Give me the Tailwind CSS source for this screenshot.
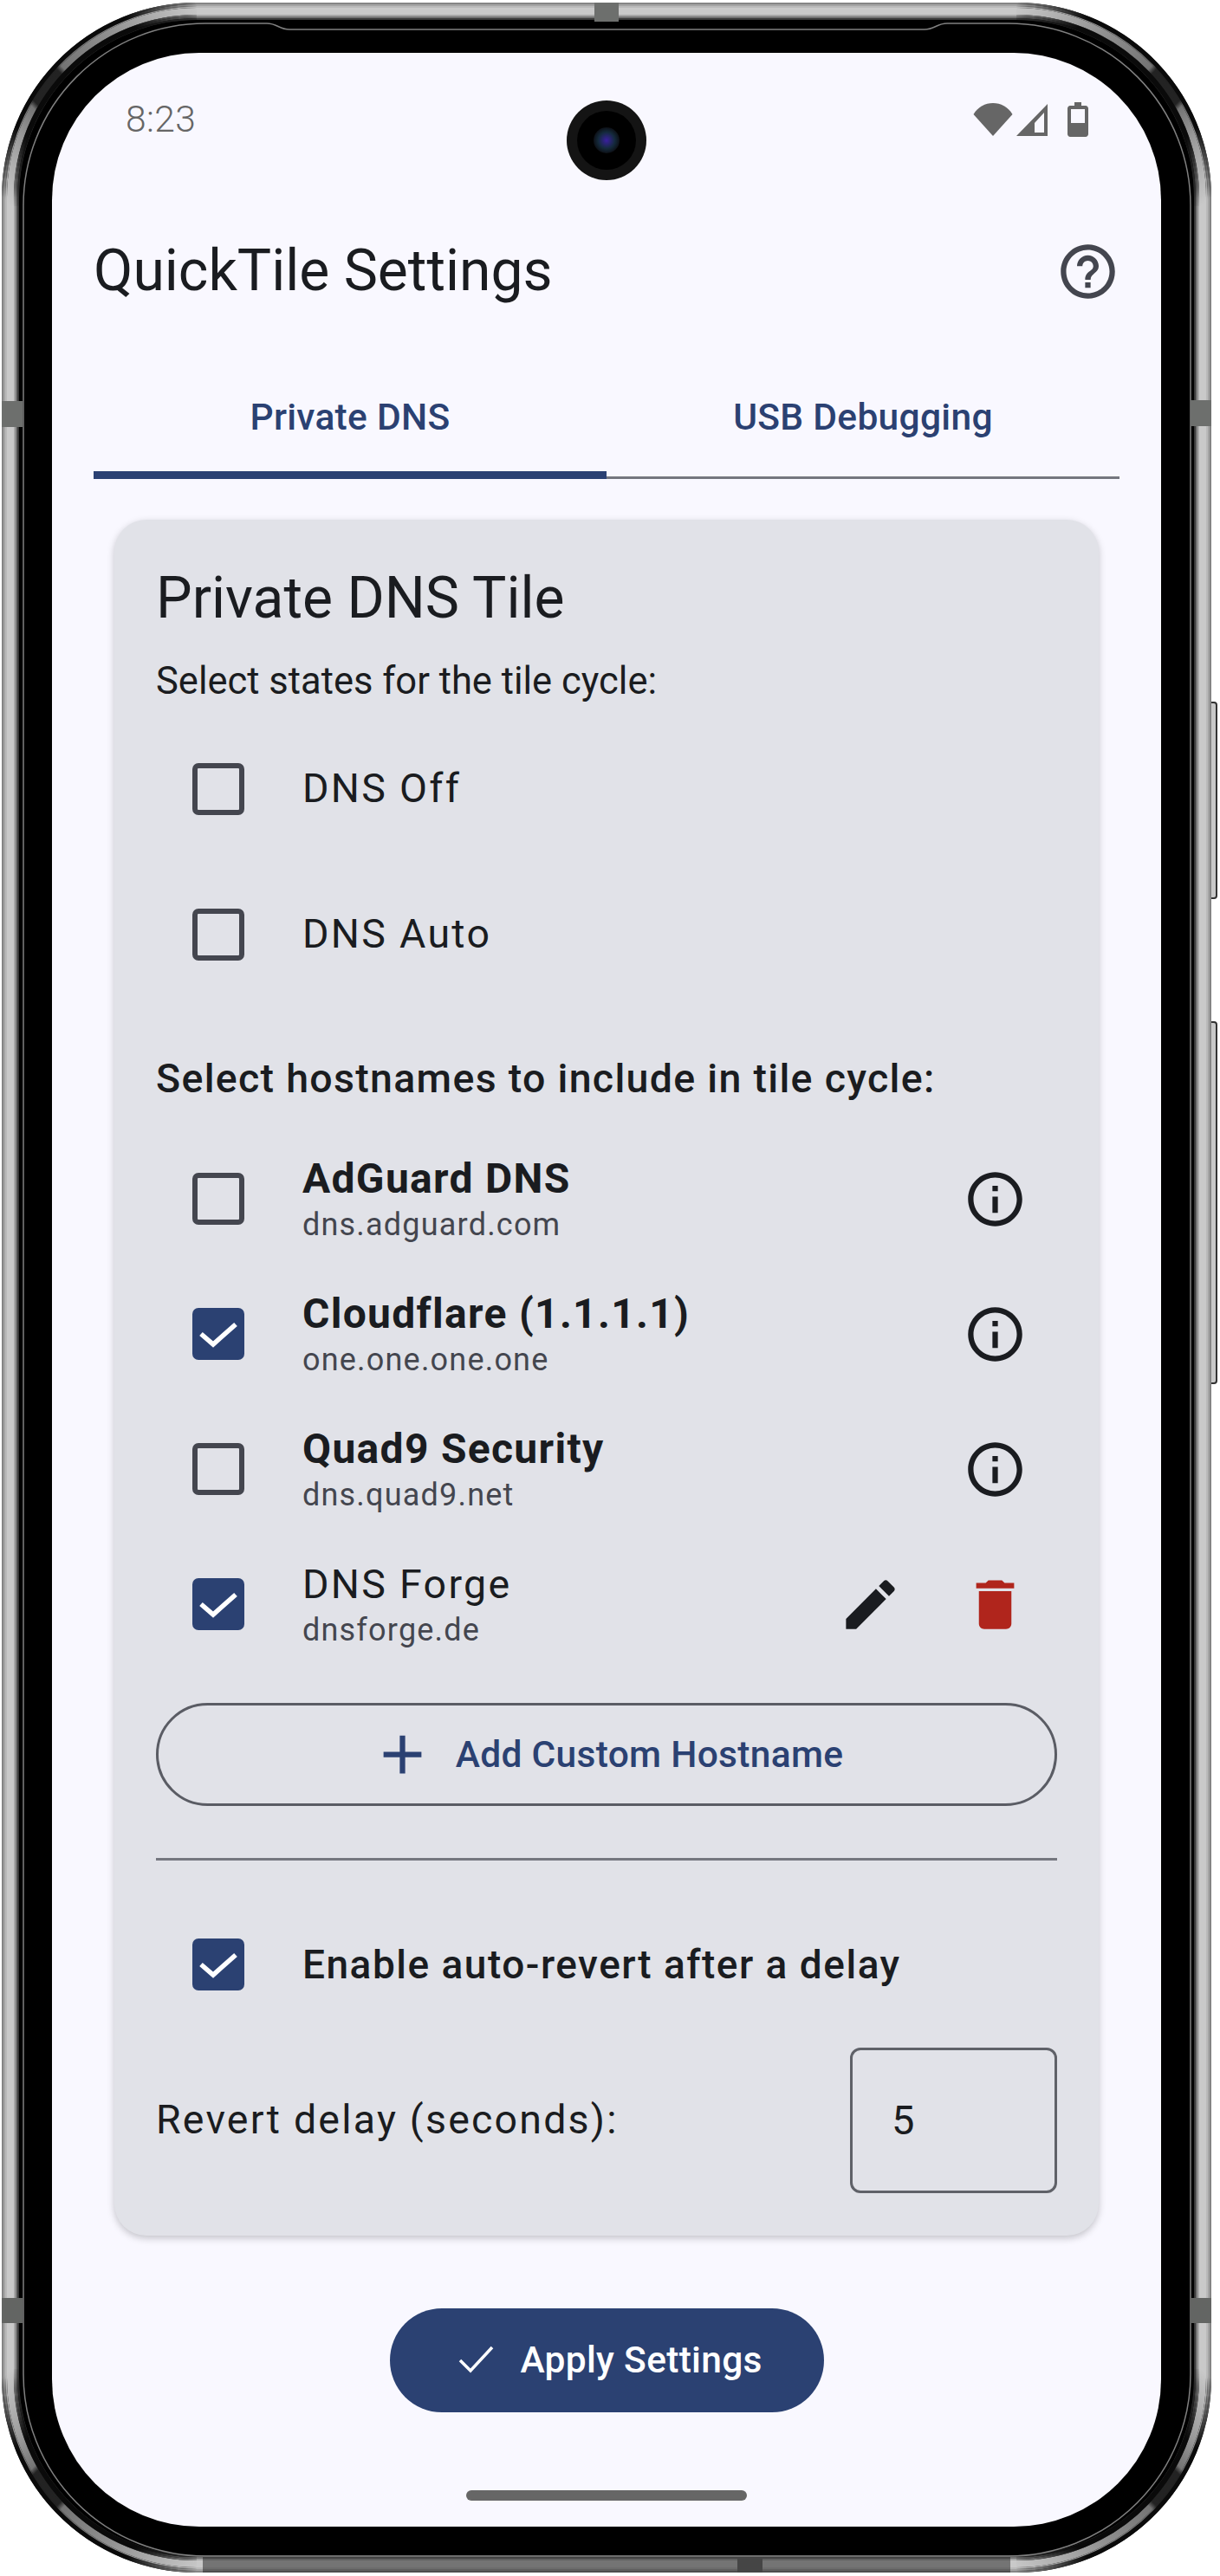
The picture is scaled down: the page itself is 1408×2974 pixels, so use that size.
<!DOCTYPE html>
<html lang="en">
<head>
  <meta charset="UTF-8" />
  <title>QuickTile Settings</title>
  <script src="https://cdn.jsdelivr.net/npm/@tailwindcss/browser@4"></script>
</head>
<body class="bg-white">
  <div class="relative w-[1408px] h-[2974px] bg-white font-[family-name:Roboto,sans-serif] text-[#1a1c20] overflow-hidden">
    <!-- side buttons -->
    <div class="absolute left-[1396px] top-[810px] w-[9px] h-[228px] bg-[#c8c8c8] border-2 border-[#333] rounded-r-[4px]"></div>
    <div class="absolute left-[1396px] top-[1179px] w-[9px] h-[419px] bg-[#c8c8c8] border-2 border-[#333] rounded-r-[4px]"></div>

    <!-- phone body -->
    <div class="relative ml-[2px] mt-[3px] w-[1396px] h-[2967px] rounded-[225px] bg-black pl-[58px] pr-[58px] pt-[58px] pb-[53px]">
      <svg class="absolute left-0 top-0" width="1396" height="2967" viewBox="0 0 1396 2967" fill="none">
        <defs>
          <linearGradient id="cornerPatch" gradientUnits="userSpaceOnUse" x1="8" y1="232" x2="232" y2="8">
            <stop offset="0" stop-color="#0c0c0c" stop-opacity="0" />
            <stop offset="0.2" stop-color="#0c0c0c" stop-opacity="0.25" />
            <stop offset="0.31" stop-color="#0c0c0c" stop-opacity="0.45" />
            <stop offset="0.33" stop-color="#1c1c1c" stop-opacity="0.96" />
            <stop offset="0.47" stop-color="#1c1c1c" stop-opacity="0.96" />
            <stop offset="0.49" stop-color="#0c0c0c" stop-opacity="0.45" />
            <stop offset="0.7" stop-color="#0c0c0c" stop-opacity="0.3" />
            <stop offset="1" stop-color="#0c0c0c" stop-opacity="0" />
          </linearGradient>
          <linearGradient id="cornerEdge" gradientUnits="userSpaceOnUse" x1="8" y1="232" x2="232" y2="8">
            <stop offset="0" stop-color="#0a0a0a" stop-opacity="0" />
            <stop offset="0.22" stop-color="#0a0a0a" />
            <stop offset="0.78" stop-color="#0a0a0a" />
            <stop offset="1" stop-color="#0a0a0a" stop-opacity="0" />
          </linearGradient>
          <g id="corner">
            <path d="M10 235A215 215 0 0 1 225 10" stroke="url(#cornerPatch)" stroke-width="12" />
            <path d="M2.500 235A222.500 222.500 0 0 1 225 2.500" stroke="url(#cornerEdge)" stroke-width="5" />
            <path d="M17 235A208 208 0 0 1 225 17" stroke="url(#cornerEdge)" stroke-width="6" />
          </g>
        </defs>
        <rect x="1" y="1" width="1394" height="2965" rx="224" stroke="#858585" stroke-width="2" />
        <rect x="3" y="3" width="1390" height="2961" rx="222" stroke="#a4a4a4" stroke-width="2" />
        <rect x="5" y="5" width="1386" height="2957" rx="220" stroke="#bababa" stroke-width="2" />
        <rect x="10" y="10" width="1376" height="2947" rx="215" stroke="#c9c9c9" stroke-width="8" />
        <rect x="15" y="15" width="1366" height="2937" rx="210" stroke="#a6a6a6" stroke-width="2" />
        <rect x="17" y="17" width="1362" height="2933" rx="208" stroke="#737373" stroke-width="2" />
        <rect x="19" y="19" width="1358" height="2929" rx="206" stroke="#393939" stroke-width="2" />
        <use href="#corner" />
        <use href="#corner" transform="translate(1396 0) scale(-1 1)" />
        <use href="#corner" transform="translate(0 2967) scale(1 -1)" />
        <use href="#corner" transform="translate(1396 2967) scale(-1 -1)" />
        <rect x="232" y="2949" width="932" height="18" fill="#000" fill-opacity="0.42" />
        <path d="M25 2738L25 235A210 210 0 0 1 235 24L306 24C318 24 320 31 332 31L1065 31C1077 31 1079 24 1091 24L1162 24A210 210 0 0 1 1372 235L1372 2738A210 210 0 0 1 1162 2948L235 2948A210 210 0 0 1 25 2738Z" stroke="#808080" stroke-width="1.500" />
        <rect x="0" y="460" width="24" height="30" fill="#6d6f6d" />
        <rect x="1372" y="459" width="24" height="30" fill="#6d6f6d" />
        <rect x="0" y="2650" width="24" height="29" fill="#636563" />
        <rect x="1372" y="2650" width="24" height="29" fill="#636563" />
        <rect x="684" y="0" width="28" height="22" fill="#6d6f6d" />
        <rect x="849" y="2950" width="29" height="17" fill="#454545" />
      </svg>

      <!-- screen -->
      <div class="relative w-[1280px] h-[2856px] rounded-[170px] bg-[#f9f8ff] overflow-hidden">
        <!-- camera -->
        <div class="absolute left-[594px] top-[55px] w-[92px] h-[92px] rounded-full bg-[#141414] flex items-center justify-center">
          <div class="w-[68px] h-[68px] rounded-full bg-black flex items-center justify-center">
            <div class="w-[30px] h-[30px] rounded-full bg-[radial-gradient(circle,#3a1fa0_0%,#142a3c_45%,#0c0c10_75%,#555555_100%)]"></div>
          </div>
        </div>

        <!-- status bar -->
        <div class="h-[154px] pl-[85px] pr-[84px] flex items-center justify-between text-[#666666]">
          <span class="text-[42.500px] leading-none font-light tracking-[0.4px]">8:23</span>
          <div class="flex items-center">
            <svg width="46" height="40" viewBox="0 0 46 40" fill="#666666"><path d="M0.500 14C6 5 14 1 23 1s17 4 22.500 13L23 39z" /></svg>
            <svg class="ml-[3px]" width="38" height="40" viewBox="0 0 38 40" fill="#666666"><path fill-rule="evenodd" d="M37 2V39H1zM33 12L22 24V35H33z" /></svg>
            <svg class="ml-[22px]" width="24" height="40" viewBox="0 0 24 40" fill="#666666"><path fill-rule="evenodd" d="M8 0h8v4h5c1.500 0 3 1.500 3 3v30c0 1.500-1.500 3-3 3H3c-1.500 0-3-1.500-3-3V7c0-1.500 1.500-3 3-3h5zM4 8v16h16V8z" /></svg>
          </div>
        </div>

        <!-- header -->
        <div class="h-[196px] pl-[48px] pr-[47px] flex items-center justify-between">
          <h1 class="text-[66px] leading-none">QuickTile Settings</h1>
          <svg width="75" height="75" viewBox="0 0 24 24" fill="#44464f"><path d="M11 18h2v-2h-2v2zm1-16C6.480 2 2 6.480 2 12s4.480 10 10 10 10-4.480 10-10S17.520 2 12 2zm0 18c-4.410 0-8-3.590-8-8s3.590-8 8-8 8 3.590 8 8-3.590 8-8 8zm0-14c-2.210 0-4 1.790-4 4h2c0-1.100.900-2 2-2s2 .900 2 2c0 2-3 1.750-3 5h2c0-2.250 3-2.500 3-5 0-2.210-1.790-4-4-4z" /></svg>
        </div>

        <!-- tabs -->
        <div class="mx-[48px] h-[142px] flex border-b-[3px] border-[#75777f] text-[42.500px] font-medium tracking-[0.3px]">
          <div class="relative w-[592px] h-[142px] flex items-center justify-center text-[#2b4172]">
            Private DNS
            <div class="absolute left-0 right-0 bottom-0 h-[9px] bg-[#2b4172]"></div>
          </div>
          <div class="w-[592px] h-[142px] flex items-center justify-center text-[#2b4172]">USB Debugging</div>
        </div>

        <!-- card -->
        <div class="mt-[47px] mx-[72px] w-[1136px] rounded-[37px] bg-[#e1e2e8] shadow-[0_3px_9px_rgba(0,0,0,0.22)] px-[48px] pt-[48px] pb-[49px]">
          <h2 class="h-[86px] flex items-center text-[66px] leading-none">Private DNS Tile</h2>
          <p class="mt-[17px] h-[72px] flex items-center text-[43.500px]">Select states for the tile cycle:</p>

          <div class="mt-[4px]">
            <div class="h-[168px] flex items-center pl-[42px]">
              <div class="w-[60px] h-[60px] rounded-[7px] border-[6.500px] border-[#44464f]"></div>
              <span class="ml-[67px] text-[46.500px] tracking-[2.300px]">DNS Off</span>
            </div>
            <div class="h-[168px] flex items-center pl-[42px]">
              <div class="w-[60px] h-[60px] rounded-[7px] border-[6.500px] border-[#44464f]"></div>
              <span class="ml-[67px] text-[46.500px] tracking-[2.300px]">DNS Auto</span>
            </div>
          </div>

          <p class="mt-[48px] h-[70px] flex items-center text-[46.500px] font-medium tracking-[1.300px]">Select hostnames to include in tile cycle:</p>

          <div class="mt-[25px]">
            <div class="h-[156px] flex items-center pl-[42px] pr-[34.500px]">
              <div class="w-[60px] h-[60px] rounded-[7px] border-[6.500px] border-[#44464f]"></div>
              <div class="ml-[67px] pt-[3px] flex-1">
                <div class="text-[48px] leading-[56px] font-bold tracking-[1.300px]">AdGuard DNS</div>
                <div class="text-[36px] leading-[50px] tracking-[1.200px] text-[#44464f]">dns.adguard.com</div>
              </div>
              <svg width="75" height="75" viewBox="0 0 24 24" fill="#1a1c20"><path d="M11 7h2v2h-2zm0 4h2v6h-2zm1-9C6.480 2 2 6.480 2 12s4.480 10 10 10 10-4.480 10-10S17.520 2 12 2zm0 18c-4.410 0-8-3.590-8-8s3.590-8 8-8 8 3.590 8 8-3.590 8-8 8z" /></svg>
            </div>
            <div class="h-[156px] flex items-center pl-[42px] pr-[34.500px]">
              <div class="w-[60px] h-[60px] rounded-[7px] bg-[#2b4172] flex items-center justify-center">
                <svg width="60" height="60" viewBox="0 0 60 60" fill="none"><polyline points="10,30 24,42 50,19" stroke="#ffffff" stroke-width="5.500" /></svg>
              </div>
              <div class="ml-[67px] pt-[3px] flex-1">
                <div class="text-[48px] leading-[56px] font-bold tracking-[1.300px]">Cloudflare (1.1.1.1)</div>
                <div class="text-[36px] leading-[50px] tracking-[1.200px] text-[#44464f]">one.one.one.one</div>
              </div>
              <svg width="75" height="75" viewBox="0 0 24 24" fill="#1a1c20"><path d="M11 7h2v2h-2zm0 4h2v6h-2zm1-9C6.480 2 2 6.480 2 12s4.480 10 10 10 10-4.480 10-10S17.520 2 12 2zm0 18c-4.410 0-8-3.590-8-8s3.590-8 8-8 8 3.590 8 8-3.590 8-8 8z" /></svg>
            </div>
            <div class="h-[156px] flex items-center pl-[42px] pr-[34.500px]">
              <div class="w-[60px] h-[60px] rounded-[7px] border-[6.500px] border-[#44464f]"></div>
              <div class="ml-[67px] pt-[3px] flex-1">
                <div class="text-[48px] leading-[56px] font-bold tracking-[1.300px]">Quad9 Security</div>
                <div class="text-[36px] leading-[50px] tracking-[1.200px] text-[#44464f]">dns.quad9.net</div>
              </div>
              <svg width="75" height="75" viewBox="0 0 24 24" fill="#1a1c20"><path d="M11 7h2v2h-2zm0 4h2v6h-2zm1-9C6.480 2 2 6.480 2 12s4.480 10 10 10 10-4.480 10-10S17.520 2 12 2zm0 18c-4.410 0-8-3.590-8-8s3.590-8 8-8 8 3.590 8 8-3.590 8-8 8z" /></svg>
            </div>
            <div class="h-[156px] flex items-center pl-[42px] pr-[34.500px]">
              <div class="w-[60px] h-[60px] rounded-[7px] bg-[#2b4172] flex items-center justify-center">
                <svg width="60" height="60" viewBox="0 0 60 60" fill="none"><polyline points="10,30 24,42 50,19" stroke="#ffffff" stroke-width="5.500" /></svg>
              </div>
              <div class="ml-[67px] pt-[3px] flex-1">
                <div class="text-[46.500px] leading-[56px] tracking-[2.300px]">DNS Forge</div>
                <div class="text-[36px] leading-[50px] tracking-[1.200px] text-[#44464f]">dnsforge.de</div>
              </div>
              <svg class="mr-[69px]" width="75" height="75" viewBox="0 0 24 24" fill="#1a1c20"><path d="M3 17.250V21h3.750L17.810 9.940l-3.750-3.750L3 17.250zM20.710 7.040c.390-.390.390-1.020 0-1.410l-2.340-2.340c-.390-.390-1.020-.390-1.410 0l-1.830 1.830 3.750 3.750 1.830-1.830z" /></svg>
              <svg width="75" height="75" viewBox="0 0 24 24" fill="#b0251c"><path d="M6 19c0 1.100.900 2 2 2h8c1.100 0 2-.900 2-2V7H6v12zM19 4h-3.500l-1-1h-5l-1 1H5v2h14V4z" /></svg>
            </div>
          </div>

          <button class="mt-[36px] w-full h-[119px] rounded-full border-[3px] border-[#5a5c64] flex items-center justify-center text-[#2b4172] text-[42.500px] font-medium tracking-[0.3px]">
            <svg class="mr-[24px]" width="75" height="75" viewBox="0 0 24 24" fill="#2b4172"><path d="M19 13h-6v6h-2v-6H5v-2h6V5h2v6h6v2z" /></svg>
            Add Custom Hostname
          </button>

          <div class="mt-[60px] h-[3px] bg-[#75777f]"></div>

          <div class="mt-[36px] h-[168px] flex items-center pl-[42px]">
            <div class="w-[60px] h-[60px] rounded-[7px] bg-[#2b4172] flex items-center justify-center">
              <svg width="60" height="60" viewBox="0 0 60 60" fill="none"><polyline points="10,30 24,42 50,19" stroke="#ffffff" stroke-width="5.500" /></svg>
            </div>
            <span class="ml-[67px] text-[46px] font-medium tracking-[1.500px]">Enable auto-revert after a delay</span>
          </div>

          <div class="mt-[12px] flex items-center justify-between">
            <span class="text-[46.500px] tracking-[2.200px]">Revert delay (seconds):</span>
            <div class="w-[239px] h-[168px] rounded-[12px] border-[3px] border-[#5f6168] flex items-center pl-[45px] text-[47px]">5</div>
          </div>
        </div>

        <!-- apply button -->
        <button class="mt-[84px] mx-auto w-[501px] h-[120px] rounded-full bg-[#2b4172] flex items-center text-white text-[42.500px] font-medium tracking-[0.3px] pl-[78px]">
          <svg class="mr-[29px]" width="44" height="34" viewBox="0 0 44 34" fill="none"><polyline points="3,17 15,29 40,2" stroke="#ffffff" stroke-width="3.500" /></svg>
          Apply Settings
        </button>

        <!-- home bar -->
        <div class="mt-[90px] mx-auto w-[324px] h-[12px] rounded-full bg-[#666666]"></div>
      </div>
    </div>
  </div>
</body>
</html>
